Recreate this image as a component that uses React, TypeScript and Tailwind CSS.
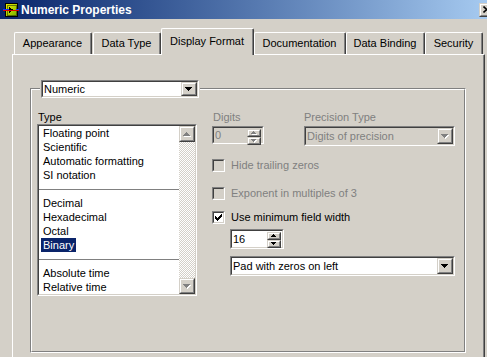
import React from "react";

type WithChildren = { className?: string; innerClass?: string; children?: React.ReactNode };

function Sunken({ className = "", innerClass = "", children }: WithChildren) {
  return (
    <div className={`border border-t-[#808080] border-l-[#808080] border-b-white border-r-white ${className}`}>
      <div className={`w-full h-full border border-t-[#404040] border-l-[#404040] border-b-[#d4d0c8] border-r-[#d4d0c8] ${innerClass}`}>
        {children}
      </div>
    </div>
  );
}

function Raised({ className = "", children }: WithChildren) {
  return (
    <div className={`bg-[#d4d0c8] border border-t-[#d4d0c8] border-l-[#d4d0c8] border-b-[#404040] border-r-[#404040] ${className}`}>
      <div className="w-full h-full border border-t-white border-l-white border-b-[#808080] border-r-[#808080] flex items-center justify-center">
        {children}
      </div>
    </div>
  );
}

function Tri({ up = false, disabled = false, small = false }: { up?: boolean; disabled?: boolean; small?: boolean }) {
  const rows = small ? [5, 3, 1] : [7, 5, 3, 1];
  const w = rows[0];
  const h = rows.length;
  const rects = rows.map((rw, i) => ({ x: (w - rw) / 2, y: up ? h - 1 - i : i, rw }));
  return (
    <svg width={w + 1} height={h + 1} shapeRendering="crispEdges" className="block">
      {disabled && rects.map((r, i) => <rect key={"s" + i} x={r.x + 1} y={r.y + 1} width={r.rw} height={1} fill="#ffffff" />)}
      {rects.map((r, i) => (
        <rect key={i} x={r.x} y={r.y} width={r.rw} height={1} fill={disabled ? "#808080" : "#000000"} />
      ))}
    </svg>
  );
}

function Combo({ text, disabled = false, className = "" }: { text: string; disabled?: boolean; className?: string }) {
  return (
    <Sunken className={className} innerClass={`flex items-stretch ${disabled ? "bg-[#d4d0c8]" : "bg-white"}`}>
      <span className={`flex-1 self-center pl-[1px] leading-[13px] ${disabled ? "text-[#808080]" : "text-black"}`}>{text}</span>
      <Raised className="w-[16px] shrink-0">
        <Tri disabled={disabled} />
      </Raised>
    </Sunken>
  );
}

function Spin({ value, disabled = false, className = "" }: { value: string; disabled?: boolean; className?: string }) {
  return (
    <Sunken className={className} innerClass={`flex items-stretch ${disabled ? "bg-[#d4d0c8]" : "bg-white"}`}>
      <span className={`flex-1 self-center pl-[1px] leading-[13px] ${disabled ? "text-[#808080]" : "text-black"}`}>{value}</span>
      <div className="flex flex-col w-[15px] shrink-0 py-[1px] pr-[1px]">
        <Raised className="flex-1">
          <Tri up small disabled={disabled} />
        </Raised>
        <Raised className="flex-1">
          <Tri small disabled={disabled} />
        </Raised>
      </div>
    </Sunken>
  );
}

function CheckMark() {
  const px: [number, number][] = [
    [6, 0], [5, 1], [6, 1], [0, 2], [4, 2], [5, 2], [6, 2], [0, 3], [1, 3], [3, 3], [4, 3], [5, 3],
    [0, 4], [1, 4], [2, 4], [3, 4], [4, 4], [1, 5], [2, 5], [3, 5], [2, 6],
  ];
  return (
    <svg width={7} height={7} shapeRendering="crispEdges" className="block">
      {px.map(([x, y], i) => (
        <rect key={i} x={x} y={y} width={1} height={1} fill="#000" />
      ))}
    </svg>
  );
}

function CheckRow({ label, checked = false, disabled = false, className = "" }: { label: string; checked?: boolean; disabled?: boolean; className?: string }) {
  return (
    <div className={`flex items-center h-[13px] ${className}`}>
      <Sunken className="w-[13px] h-[13px] shrink-0" innerClass={`flex items-center justify-center ${disabled ? "bg-[#d4d0c8]" : "bg-white"}`}>
        {checked && <CheckMark />}
      </Sunken>
      <span className={`ml-[6px] leading-[13px] ${disabled ? "text-[#808080]" : "text-black"}`}>{label}</span>
    </div>
  );
}

function Tab({ label, selected = false, className = "" }: { label: string; selected?: boolean; className?: string }) {
  if (selected) {
    return (
      <div className={`h-[27px] bg-[#d4d0c8] border-t border-l border-r border-t-white border-l-white border-r-[#404040] rounded-t-[2px] ${className}`}>
        <div className="h-full border-r border-r-[#808080] flex justify-center pt-[6px] leading-[13px]">{label}</div>
      </div>
    );
  }
  return (
    <div className={`h-[22px] mb-[1px] bg-[#d4d0c8] border-t border-l border-r border-t-white border-l-white border-r-[#404040] rounded-t-[2px] ${className}`}>
      <div className="h-full border-r border-r-[#808080] flex justify-center pt-[4px] leading-[13px]">{label}</div>
    </div>
  );
}

function AppIcon() {
  return (
    <svg width={16} height={16} viewBox="0 0 16 16" shapeRendering="crispEdges" className="block">
      <defs>
        <linearGradient id="ig" x1="0" y1="0" x2="1" y2="1">
          <stop offset="0" stopColor="#f4f000" />
          <stop offset="1" stopColor="#6fae00" />
        </linearGradient>
      </defs>
      <rect x={2.5} y={1.5} width={12} height={13} fill="url(#ig)" stroke="#000" />
      <rect x={4} y={3} width={9} height={10} fill="none" stroke="#2a3a00" strokeWidth={0.6} />
      <polygon points="6,5 11,8 6,11" fill="#000" />
      <rect x={0} y={8} width={16} height={1} fill="#e00000" />
      <rect x={0} y={7} width={6} height={1} fill="#1030ff" />
      <rect x={13} y={7} width={3} height={1} fill="#1030ff" />
    </svg>
  );
}

function CloseGlyph() {
  return (
    <svg width={8} height={7} viewBox="0 0 8 7" className="block">
      <path d="M0.5 0.5 L7 6.5 M7 0.5 L0.5 6.5" stroke="#000" strokeWidth={1.6} />
    </svg>
  );
}

export default function App() {
  const items1 = ["Floating point", "Scientific", "Automatic formatting", "SI notation"];
  const items2 = ["Decimal", "Hexadecimal", "Octal", "Binary"];
  const items3 = ["Absolute time", "Relative time"];
  const Row = ({ t, sel = false }: { t: string; sel?: boolean }) => (
    <div className="h-[14px] flex items-center pl-[2px]">
      <span className={`px-[2px] leading-[14px] ${sel ? "bg-[#0a246a] text-white" : "text-black"}`}>{t}</span>
    </div>
  );
  const Sep = () => (
    <div className="h-[14px] pt-[7px]">
      <div className="h-[1px] bg-[#808080]" />
    </div>
  );

  return (
    <div className="w-[487px] h-[357px] overflow-hidden bg-[#d4d0c8] flex flex-col font-['Liberation_Sans',Arial,sans-serif] text-[11px] text-black">
      {/* Title bar */}
      <div className="h-[19px] shrink-0 flex items-center bg-gradient-to-r from-[#0a246a] to-[#a6caf0] pl-[3px]">
        <AppIcon />
        <span className="ml-[2px] text-white font-bold text-[12px] leading-[14px]">Numeric Properties</span>
        <div className="ml-auto mr-[-8px] w-[16px] h-[14px] shrink-0">
          <Raised className="w-full h-full">
            <CloseGlyph />
          </Raised>
        </div>
      </div>

      {/* Tabs */}
      <div className="relative z-10 mt-[9px] -mb-[1px] h-[27px] shrink-0 flex items-end pl-[14px]">
        <Tab label="Appearance" className="w-[78px]" />
        <Tab label="Data Type" className="ml-[1px] w-[68px]" />
        <Tab label="Display Format" selected className="w-[93px]" />
        <Tab label="Documentation" className="w-[92px]" />
        <Tab label="Data Binding" className="w-[79px]" />
        <Tab label="Security" className="w-[58px]" />
      </div>

      {/* Panel */}
      <div className="flex-1 ml-[12px] w-[473px] border-t border-l border-r border-t-white border-l-white border-r-[#404040]">
        <div className="h-full border-r border-r-[#808080] pt-[33px] pl-[17px]">
          {/* Group box */}
          <div className="relative w-[436px] h-[265px] border border-t-[#808080] border-l-[#808080] border-b-white border-r-white">
            <div className="w-full h-full border border-t-white border-l-white border-b-[#808080] border-r-[#808080] pl-[5px] pt-[21px] flex">
              {/* Left column */}
              <div className="flex flex-col w-[160px]">
                <div className="h-[13px] leading-[13px] pl-[1px]">Type</div>
                <Sunken className="w-[160px] h-[172px]" innerClass="bg-white flex">
                  <div className="flex-1 flex flex-col">
                    {items1.map((t) => <Row key={t} t={t} />)}
                    <Sep />
                    {items2.map((t) => <Row key={t} t={t} sel={t === "Binary"} />)}
                    <Sep />
                    {items3.map((t) => <Row key={t} t={t} />)}
                  </div>
                  <div className="w-[16px] flex flex-col shrink-0">
                    <Raised className="h-[16px] w-[16px]">
                      <Tri up disabled />
                    </Raised>
                    <div className="flex-1 bg-[repeating-conic-gradient(#ffffff_0%_25%,#d4d0c8_0%_50%)] bg-[length:2px_2px]" />
                    <Raised className="h-[16px] w-[16px]">
                      <Tri disabled />
                    </Raised>
                  </div>
                </Sunken>
              </div>

              {/* Right column */}
              <div className="ml-[15px] flex flex-col">
                <div className="flex">
                  <div className="w-[92px] flex flex-col">
                    <div className="h-[13px] leading-[13px] text-[#808080] pl-[1px]">Digits</div>
                    <Spin value="0" disabled className="mt-[2px] w-[52px] h-[18px]" />
                  </div>
                  <div className="flex flex-col">
                    <div className="h-[13px] leading-[13px] text-[#808080]">Precision Type</div>
                    <Combo text="Digits of precision" disabled className="mt-[2px] w-[151px] h-[20px]" />
                  </div>
                </div>
                <CheckRow label="Hide trailing zeros" disabled className="mt-[13px]" />
                <CheckRow label="Exponent in multiples of 3" disabled className="mt-[15px]" />
                <CheckRow label="Use minimum field width" checked className="mt-[11px]" />
                <Spin value="16" className="mt-[5px] ml-[18px] w-[54px] h-[20px]" />
                <Combo text="Pad with zeros on left" className="mt-[7px] ml-[18px] w-[225px] h-[20px]" />
              </div>
            </div>

            {/* Header combo overlapping the group border */}
            <div className="absolute left-[9px] top-[-10px] p-[1px] bg-[#d4d0c8]">
              <Combo text="Numeric" className="w-[158px] h-[18px]" />
            </div>
          </div>
        </div>
      </div>
    </div>
  );
}
